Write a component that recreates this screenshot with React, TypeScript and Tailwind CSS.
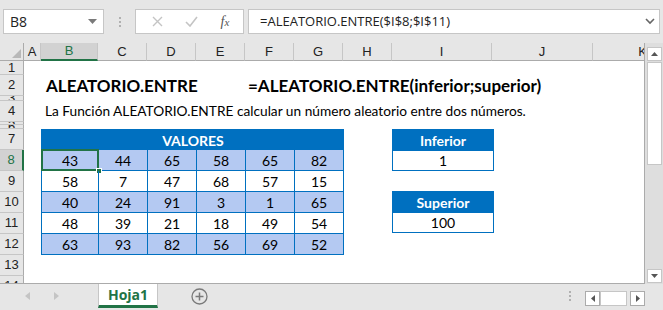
import React from "react";

const cols = [
  { l: "A", w: "w-[17px]" },
  { l: "B", w: "w-[57px]", sel: true },
  { l: "C", w: "w-[49px]" },
  { l: "D", w: "w-[49px]" },
  { l: "E", w: "w-[49px]" },
  { l: "F", w: "w-[49px]" },
  { l: "G", w: "w-[49px]" },
  { l: "H", w: "w-[49px]" },
  { l: "I", w: "w-[100px]" },
  { l: "J", w: "w-[101px]" },
  { l: "K", w: "w-[100px]" },
];

const rowsH = [
  { n: 1, h: "h-[14px]" },
  { n: 2, h: "h-[21px]" },
  { n: 3, h: "h-[5px]" },
  { n: 4, h: "h-[21px]" },
  { n: 5, h: "h-[3px]" },
  { n: 6, h: "h-[4px]" },
  { n: 7, h: "h-[21px]" },
  { n: 8, h: "h-[21px]", sel: true },
  { n: 9, h: "h-[21px]" },
  { n: 10, h: "h-[21px]" },
  { n: 11, h: "h-[21px]" },
  { n: 12, h: "h-[21px]" },
  { n: 13, h: "h-[21px]" },
  { n: 14, h: "h-[21px]" },
];

const data = [
  [43, 44, 65, 58, 65, 82],
  [58, 7, 47, 68, 57, 15],
  [40, 24, 91, 3, 1, 65],
  [48, 39, 21, 18, 49, 54],
  [63, 93, 82, 56, 69, 52],
];

function TopBar() {
  return (
    <div className="h-[43px] flex items-start pt-[9px] pl-[3px] font-['Open_Sans',sans-serif]">
      <div className="w-[101px] h-[25px] bg-white border border-[#c6c6c6] flex items-center justify-between pl-[6px] pr-[6px] text-[14px] text-[#222]">
        <span>B8</span>
        <svg width="9" height="5" viewBox="0 0 9 5"><path d="M0 0h9L4.5 5z" fill="#7a7a7a" /></svg>
      </div>
      <div className="w-[31px] h-[25px] flex flex-col items-center justify-center gap-[2px]">
        <span className="w-[2px] h-[2px] bg-[#b0b0b0]" />
        <span className="w-[2px] h-[2px] bg-[#b0b0b0]" />
        <span className="w-[2px] h-[2px] bg-[#b0b0b0]" />
      </div>
      <div className="w-[109px] h-[25px] bg-white border border-[#c6c6c6] flex items-center">
        <div className="w-[38px] flex justify-center pl-[4px]">
          <svg width="11" height="11" viewBox="0 0 11 11"><path d="M1 1l9 9M10 1l-9 9" stroke="#c4c4c4" strokeWidth="1.4" /></svg>
        </div>
        <div className="w-[34px] flex justify-center">
          <svg width="13" height="11" viewBox="0 0 13 11"><path d="M1 6l4 4 7-9" stroke="#c4c4c4" strokeWidth="1.6" fill="none" /></svg>
        </div>
        <div className="w-[34px] flex justify-center font-['Liberation_Serif',serif] italic text-[14px] text-[#555]">
          <span>f<span className="text-[11px]">x</span></span>
        </div>
      </div>
      <div className="w-[4px]" />
      <div className="w-[412px] h-[25px] bg-white border border-[#c6c6c6] flex items-center justify-between pl-[11px] pr-[4px] text-[13px] text-[#222] whitespace-nowrap">
        <span>=ALEATORIO.ENTRE($I$8;$I$11)</span>
        <svg width="10" height="7" viewBox="0 0 10 7"><path d="M1 1l4 4 4-4" stroke="#666" strokeWidth="1.6" fill="none" /></svg>
      </div>
    </div>
  );
}

function Sheet() {
  return (
    <div className="w-[645px] h-[241px] bg-white border-r border-b border-[#ababab] overflow-hidden flex flex-col">
      {/* column headers */}
      <div className="flex h-[18px] shrink-0 bg-[#e6e6e6] font-['Liberation_Sans',sans-serif] text-[13px] text-[#222]">
        <div className="w-[24px] shrink-0 h-[18px] border-r border-b border-[#ababab] flex items-end justify-end p-[2px]">
          <svg width="9" height="9" viewBox="0 0 9 9"><path d="M9 0v9H0z" fill="#b8b8b8" /></svg>
        </div>
        {cols.map((c) => (
          <div
            key={c.l}
            className={
              c.sel
                ? `${c.w} shrink-0 h-[18px] bg-[#d2d2d2] border-r border-[#c6c6c6] border-b-2 border-b-[#217346] text-[#217346] flex items-center justify-center`
                : `${c.w} shrink-0 h-[18px] border-r border-b border-[#c6c6c6] border-b-[#ababab] flex items-center justify-center`
            }
          >
            {c.l}
          </div>
        ))}
      </div>
      <div className="flex flex-1 min-h-0">
        {/* row headers */}
        <div className="w-[24px] shrink-0 flex flex-col bg-[#e6e6e6] font-['Liberation_Sans',sans-serif] text-[13px] text-[#222]">
          {rowsH.map((r) => (
            <div
              key={r.n}
              className={
                r.sel
                  ? `${r.h} shrink-0 bg-[#d2d2d2] text-[#217346] border-b border-[#c6c6c6] border-r-2 border-r-[#217346] flex items-center justify-center overflow-hidden`
                  : `${r.h} shrink-0 border-b border-[#c6c6c6] border-r border-r-[#ababab] flex items-center justify-center overflow-hidden`
              }
            >
              {r.n}
            </div>
          ))}
        </div>
        {/* cells */}
        <div className="flex-1 flex flex-col font-['Lato',sans-serif] text-black">
          <div className="h-[14px] shrink-0" />
          <div className="h-[21px] shrink-0 flex items-center whitespace-nowrap font-bold text-[17px]">
            <div className="w-[224px] pl-[22px]">ALEATORIO.ENTRE</div>
            <div>=ALEATORIO.ENTRE(inferior;superior)</div>
          </div>
          <div className="h-[5px] shrink-0" />
          <div className="h-[21px] shrink-0 flex items-center whitespace-nowrap pl-[21px] text-[13.7px]">
            La Función ALEATORIO.ENTRE calcular un número aleatorio entre dos números.
          </div>
          <div className="h-[7px] shrink-0" />
          <div className="flex pl-[17px] text-[14px]">
            <div className="w-[303px] border-l border-t border-[#0070c0] flex flex-col">
              <div className="h-[20px] bg-[#0070c0] text-white font-bold flex items-center justify-center">
                VALORES
              </div>
              {data.map((row, i) => (
                <div key={i} className={i % 2 === 0 ? "flex h-[21px] bg-[#b4c9f2]" : "flex h-[21px] bg-white"}>
                  {row.map((v, j) => (
                    <div
                      key={j}
                      className={
                        j === 0
                          ? "relative w-[57px] border-r border-b border-[#0070c0] flex items-center justify-center"
                          : "w-[49px] border-r border-b border-[#0070c0] flex items-center justify-center"
                      }
                    >
                      {v}
                      {i === 0 && j === 0 && (
                        <>
                          <div className="absolute -left-[1px] -top-[1px] -right-[1px] -bottom-[1px] border-2 border-[#217346]" />
                          <div className="absolute -right-[4px] -bottom-[4px] w-[6px] h-[6px] bg-[#217346] border border-white" />
                        </>
                      )}
                    </div>
                  ))}
                </div>
              ))}
            </div>
            <div className="w-[48px]" />
            <div className="w-[102px] flex flex-col">
              <div className="border border-[#0070c0]">
                <div className="h-[20px] bg-[#0070c0] text-white font-bold flex items-center justify-center">Inferior</div>
                <div className="h-[20px] bg-white flex items-center justify-center border-t border-[#0070c0]">1</div>
              </div>
              <div className="h-[20px]" />
              <div className="border border-[#0070c0]">
                <div className="h-[20px] bg-[#0070c0] text-white font-bold flex items-center justify-center">Superior</div>
                <div className="h-[20px] bg-white flex items-center justify-center border-t border-[#0070c0]">100</div>
              </div>
            </div>
          </div>
        </div>
      </div>
    </div>
  );
}

function VScroll() {
  return (
    <div className="w-[18px] h-[241px] bg-[#dedede] flex flex-col items-center pt-[4px] pb-[1px]">
      <div className="w-[15px] h-[14px] bg-white border border-[#c6c6c6] flex items-center justify-center">
        <svg width="7" height="4" viewBox="0 0 7 4"><path d="M0 4L3.5 0 7 4z" fill="#555" /></svg>
      </div>
      <div className="w-[15px] h-[103px] bg-white border border-[#c6c6c6] mt-[1px]" />
      <div className="flex-1" />
      <div className="w-[15px] h-[14px] bg-white border border-[#c6c6c6] flex items-center justify-center">
        <svg width="7" height="4" viewBox="0 0 7 4"><path d="M0 0h7L3.5 4z" fill="#555" /></svg>
      </div>
    </div>
  );
}

function BottomBar() {
  return (
    <div className="h-[26px] flex items-start bg-[#e6e6e6]">
      <div className="w-[98px] h-[24px] flex items-center pl-[25px]">
        <svg width="5" height="8" viewBox="0 0 5 8"><path d="M5 0v8L0 4z" fill="#c4c4c4" /></svg>
        <div className="w-[24px]" />
        <svg width="5" height="8" viewBox="0 0 5 8"><path d="M0 0v8l5-4z" fill="#c4c4c4" /></svg>
      </div>
      <div className="w-[60px] h-[24px] bg-white border-x border-[#c6c6c6] border-b-[3px] border-b-[#217346] flex items-center justify-center font-['Open_Sans',sans-serif] font-bold text-[14px] text-[#217346]">
        Hoja1
      </div>
      <div className="w-[33px]" />
      <div className="h-[24px] flex items-center">
        <svg width="17" height="17" viewBox="0 0 17 17">
          <circle cx="8.5" cy="8.5" r="7.5" fill="none" stroke="#7a7a7a" strokeWidth="1.3" />
          <path d="M8.5 4.5v8M4.5 8.5h8" stroke="#7a7a7a" strokeWidth="1.5" />
        </svg>
      </div>
      <div className="flex-1" />
      <div className="h-[24px] flex items-center gap-[2px] flex-col justify-center mr-[14px]">
        <span className="w-[2px] h-[2px] bg-[#b0b0b0]" />
        <span className="w-[2px] h-[2px] bg-[#b0b0b0]" />
        <span className="w-[2px] h-[2px] bg-[#b0b0b0]" />
      </div>
      <div className="flex items-center mt-[7px] mr-[18px]">
        <div className="w-[15px] h-[15px] bg-white border border-[#ababab] flex items-center justify-center">
          <svg width="4" height="7" viewBox="0 0 4 7"><path d="M4 0v7L0 3.5z" fill="#555" /></svg>
        </div>
        <div className="w-[27px] h-[15px] bg-white border border-[#c6c6c6]" />
        <div className="w-[3px]" />
        <div className="w-[15px] h-[15px] bg-white border border-[#ababab] flex items-center justify-center">
          <svg width="4" height="7" viewBox="0 0 4 7"><path d="M0 0v7l4-3.5z" fill="#555" /></svg>
        </div>
      </div>
    </div>
  );
}

export default function App() {
  return (
    <div className="w-[663px] h-[310px] bg-[#e6e6e6] overflow-hidden flex flex-col">
      <TopBar />
      <div className="flex h-[241px]">
        <Sheet />
        <VScroll />
      </div>
      <BottomBar />
    </div>
  );
}
